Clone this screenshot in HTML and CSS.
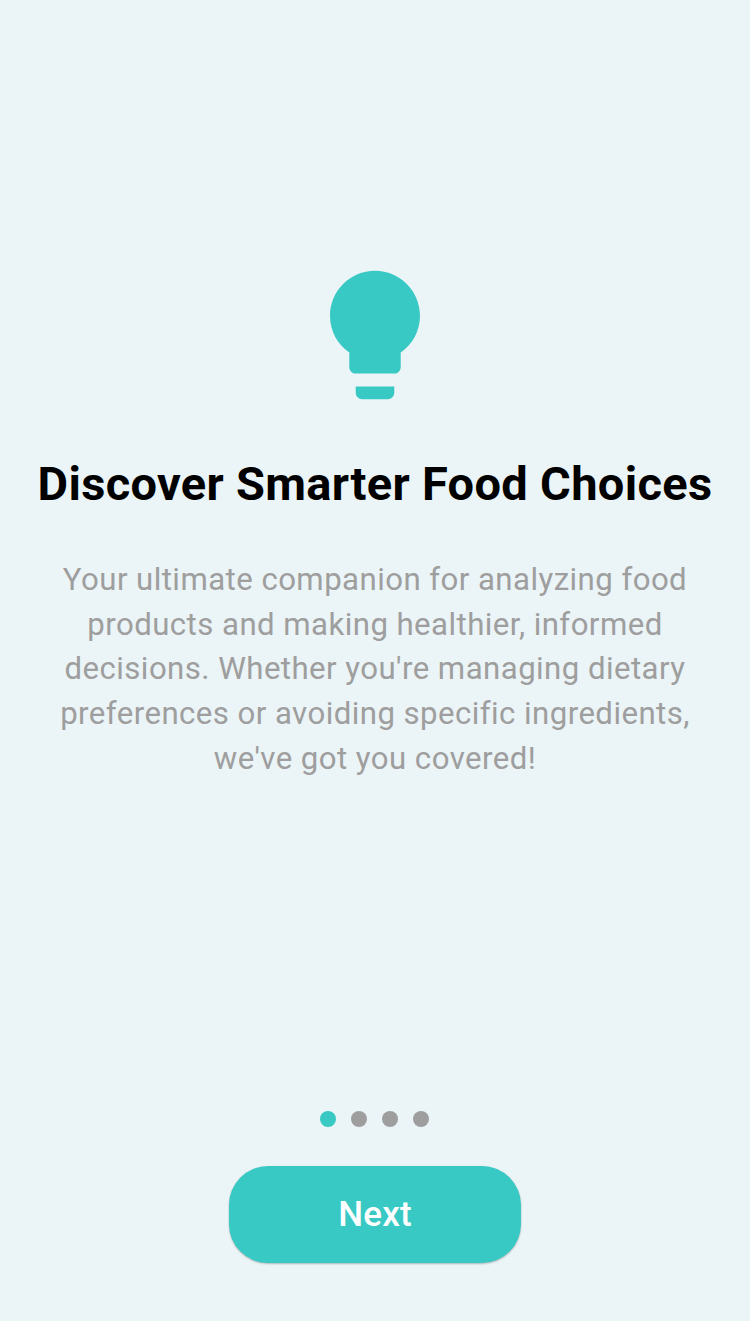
FILE: index.html
```
<!DOCTYPE html>
<html lang="en">
<head>
    <meta charset="UTF-8">
    <meta name="viewport" content="width=device-width, initial-scale=1.0">
    <title>Welcome</title>
    <link rel="stylesheet" href="styles.css">
</head>
<body>
    <div class="screen">
        <main class="slide">
            <svg class="bulb" viewBox="5 2 14 20" aria-hidden="true">
                <path d="M9 21c0 .55.45 1 1 1h4c.55 0 1-.45 1-1v-1H9v1zm3-19C8.14 2 5 5.14 5 9c0 2.38 1.19 4.47 3 5.74V17c0 .55.45 1 1 1h6c.55 0 1-.45 1-1v-2.26c1.81-1.27 3-3.36 3-5.74 0-3.86-3.14-7-7-7z"/>
            </svg>
            <h1>Discover Smarter Food Choices</h1>
            <p>Your ultimate companion for analyzing food<br>
                products and making healthier, informed<br>
                decisions. Whether you're managing dietary<br>
                preferences or avoiding specific ingredients,<br>
                we've got you covered!</p>
        </main>

        <footer class="controls">
            <div class="dots">
                <span class="dot active"></span>
                <span class="dot"></span>
                <span class="dot"></span>
                <span class="dot"></span>
            </div>
            <button type="button">Next</button>
        </footer>
    </div>
</body>
</html>
```
FILE: styles.css
```
body {
    margin: 0;
    font-family: Roboto, sans-serif;
    background-color: #fff;
}

.screen {
    display: flex;
    flex-direction: column;
    justify-content: space-between;
    box-sizing: border-box;
    height: 1321px;
    padding: 270px 0 58px;
    overflow: hidden;
    background-color: #ebf4f6;
}

.slide,
.controls {
    display: flex;
    flex-direction: column;
    align-items: center;
    text-align: center;
}

.bulb {
    width: 90px;
    height: 130px;
    fill: #38c9c4;
}

h1 {
    margin: 52px 0 0;
    font-size: 47px;
    font-weight: 700;
    line-height: 64px;
    letter-spacing: 0.32px;
    white-space: nowrap;
    color: #000;
}

p {
    margin: 42px 0 0;
    font-size: 31.2px;
    line-height: 44.7px;
    letter-spacing: 0.44px;
    white-space: nowrap;
    color: #9e9e9e;
}

.dots {
    display: flex;
    gap: 15px;
    margin: 0 1px 39px 0;
}

.dot {
    width: 16px;
    height: 16px;
    border-radius: 50%;
    background-color: #9e9e9e;
}

.dot.active {
    background-color: #38c9c4;
}

button {
    width: 292px;
    height: 97px;
    padding: 0;
    border: none;
    border-radius: 39px;
    font-family: inherit;
    font-size: 35px;
    font-weight: 500;
    letter-spacing: 0.2px;
    color: #fff;
    background-color: #38c9c4;
    box-shadow: 0 1px 2px rgba(0, 0, 0, 0.25);
}
```
